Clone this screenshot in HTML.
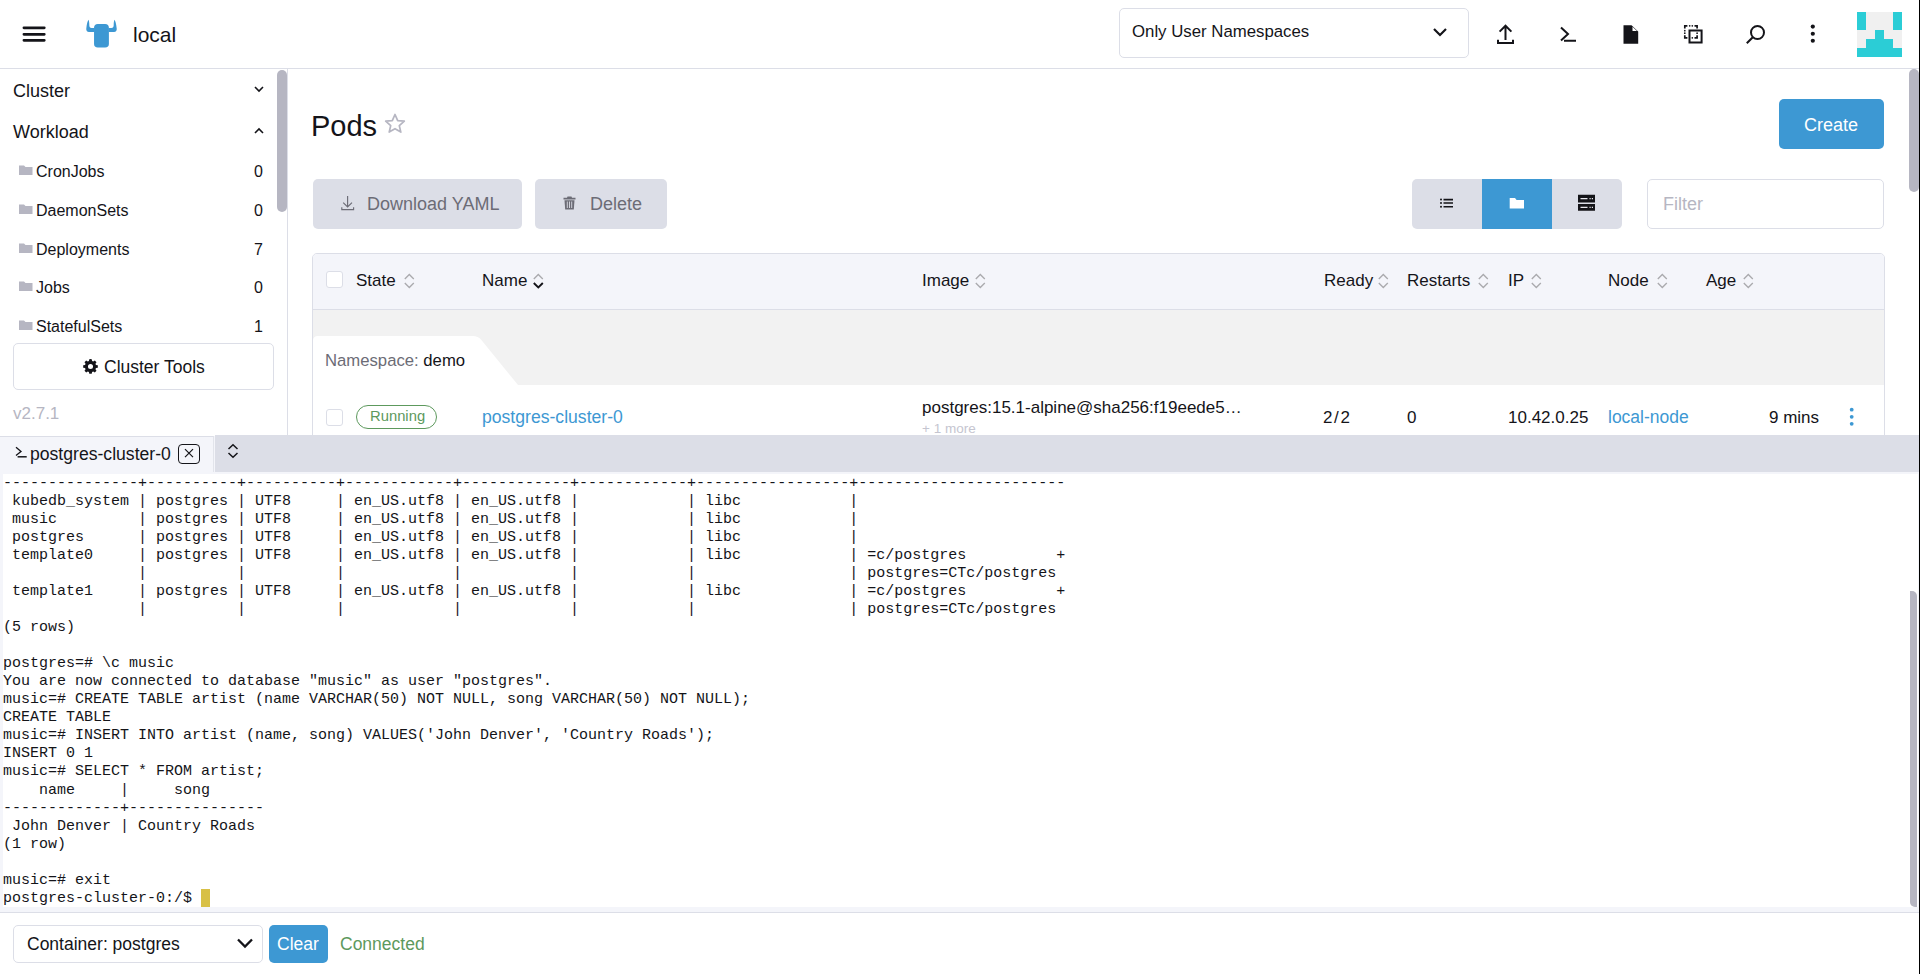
<!DOCTYPE html>
<html><head><meta charset="utf-8">
<style>
*{box-sizing:border-box;margin:0;padding:0}
html,body{width:1920px;height:974px;overflow:hidden;background:#fff}
body{font-family:"Liberation Sans",sans-serif;color:#141419;position:relative}
.a{position:absolute}
.t{position:absolute;white-space:nowrap;line-height:1}
svg{display:block}
#hdr{left:0;top:0;width:1920px;height:69px;border-bottom:1px solid #dcdee7;background:#fff}
#side{left:0;top:69px;width:288px;height:366px;border-right:1px solid #dcdee7;background:#fff}
.cnt{color:#141419}
.btn-dis{background:#dcdee7;border-radius:5px;color:#6c6c76}
.hdrc{font-size:17px;color:#141419}
.sort{position:absolute}
#term{left:0;top:472px;width:1920px;height:440px;background:#f4f5fa}
#termin{position:absolute;left:3px;top:2px;width:1915px;height:433px;background:#fff;overflow:hidden}
.tl{font-family:"Liberation Mono",monospace;font-size:15px;line-height:18px;height:18px;color:#141419;position:absolute;left:0;white-space:pre}
</style></head>
<body>
<!-- HEADER -->
<div id="hdr" class="a">
  <svg class="a" style="left:20px;top:22px" width="28" height="24" viewBox="0 0 28 24"><path d="M3.9 5.85H24.3M3.9 12.35H24.3M3.9 18.35H24.3" stroke="#141419" stroke-width="2.7" stroke-linecap="round"/></svg>
  <svg class="a" style="left:86px;top:19px" width="32" height="30" viewBox="0 0 32 30"><rect x="8.04" y="5" width="14.86" height="23.6" rx="3.8" fill="#3d98d3"/><path fill="#3d98d3" d="M8.5 9H5.6C4 9 3.3 7.8 3.3 6C3.3 4 3.1 2 2.5 0.8C1.6 2 0.8 5 0.3 9.5C0 11.5 1 12.9 3 12.9H8.5Z M22.5 9H25.4C27 9 27.7 7.8 27.7 6C27.7 4 27.9 2 28.5 0.8C29.4 2 30.2 5 30.7 9.5C31 11.5 30 12.9 28 12.9H22.5Z"/></svg>
  <div class="t" style="left:133px;top:24px;font-size:21px">local</div>
  <div class="a" style="left:1119px;top:8px;width:350px;height:50px;border:1px solid #dcdee7;border-radius:5px"></div>
  <div class="t" style="left:1132px;top:24px;font-size:16.8px">Only User Namespaces</div>
  <svg class="a" style="left:1432px;top:27px" width="16" height="10" viewBox="0 0 16 10"><path d="M2 2l6 6 6-6" fill="none" stroke="#141419" stroke-width="2.2"/></svg>
  <svg class="a" style="left:1495px;top:23px" width="22" height="22" viewBox="0 0 22 22"><path d="M10.5 3V17M4.6 8.6l5.9-5.9 5.9 5.9M3 16.8v3.2h15v-3.2" fill="none" stroke="#141419" stroke-width="2"/></svg>
  <svg class="a" style="left:1558px;top:25px" width="20" height="18" viewBox="0 0 20 18"><path d="M3 2.5l7 6.5-7 6.5M6 15.8h12" fill="none" stroke="#141419" stroke-width="2"/></svg>
  <svg class="a" style="left:1623px;top:25px" width="16" height="19" viewBox="0 0 16 19"><path d="M0.5 0.3H8.5L15.2 6.5V18.7H0.5z" fill="#141419"/><path d="M9.5 1.8V6H14z" fill="#fff"/></svg>
  <svg class="a" style="left:1683px;top:24px" width="21" height="21" viewBox="0 0 21 21"><g fill="none" stroke="#141419" stroke-width="1.7"><path d="M1.8 4.4V1.8H4.4M11.5 1.8H14.1V4.4M1.8 11.2V13.8H4.4M11.5 13.8H14.1V11.2"/></g><g fill="#141419"><circle cx="6.7" cy="1.8" r="0.85"/><circle cx="9.3" cy="1.8" r="0.85"/><circle cx="1.8" cy="6.7" r="0.85"/><circle cx="1.8" cy="9.2" r="0.85"/><circle cx="14.1" cy="9.2" r="0.85"/><circle cx="9.3" cy="13.8" r="0.85"/></g><rect x="6.5" y="6.5" width="12.1" height="12" fill="none" stroke="#141419" stroke-width="2"/></svg>
  <svg class="a" style="left:1745px;top:23px" width="22" height="22" viewBox="0 0 22 22"><circle cx="12.5" cy="9.5" r="6.5" fill="none" stroke="#141419" stroke-width="2"/><path d="M7.8 14.2L1.8 20.2" stroke="#141419" stroke-width="2"/></svg>
  <svg class="a" style="left:1808px;top:22px" width="10" height="24" viewBox="0 0 10 24"><circle cx="4.8" cy="4.6" r="2.1" fill="#141419"/><circle cx="4.8" cy="11.75" r="2.1" fill="#141419"/><circle cx="4.8" cy="18.75" r="2.1" fill="#141419"/></svg>
  <svg class="a" style="left:1857px;top:12px" width="45" height="45" viewBox="0 0 5 5" shape-rendering="crispEdges"><rect width="5" height="5" fill="#f0f0f0"/><path fill="#2bcdd6" d="M0 0h1v2H0zM4 0h1v2H4zM2 2h1v1H2zM1 3h3v1H1zM0 4h5v1H0z"/></svg>
</div>
<!-- SIDEBAR -->
<div id="side" class="a">
  <div class="t" style="left:13px;top:13px;font-size:18px">Cluster</div>
  <svg class="a" style="left:254px;top:17px" width="10" height="7" viewBox="0 0 10 7"><path d="M1 1l4 4 4-4" fill="none" stroke="#141419" stroke-width="1.6"/></svg>
  <div class="t" style="left:13px;top:54px;font-size:18px">Workload</div>
  <svg class="a" style="left:254px;top:58px" width="10" height="7" viewBox="0 0 10 7"><path d="M1 6l4-4 4 4" fill="none" stroke="#141419" stroke-width="1.6"/></svg>
  <svg class="a" style="left:19px;top:96px" width="14" height="10" viewBox="0 0 14 10"><path d="M0 0.5h5l1.5 1.5H13.5V10H0z" fill="#b6b6c2"/></svg>
  <div class="t" style="left:36px;top:95px;font-size:16px">CronJobs</div>
  <div class="t" style="left:254px;top:95px;font-size:16px">0</div>
  <svg class="a" style="left:19px;top:135px" width="14" height="10" viewBox="0 0 14 10"><path d="M0 0.5h5l1.5 1.5H13.5V10H0z" fill="#b6b6c2"/></svg>
  <div class="t" style="left:36px;top:134px;font-size:16px">DaemonSets</div>
  <div class="t" style="left:254px;top:134px;font-size:16px">0</div>
  <svg class="a" style="left:19px;top:174px" width="14" height="10" viewBox="0 0 14 10"><path d="M0 0.5h5l1.5 1.5H13.5V10H0z" fill="#b6b6c2"/></svg>
  <div class="t" style="left:36px;top:173px;font-size:16px">Deployments</div>
  <div class="t" style="left:254px;top:173px;font-size:16px">7</div>
  <svg class="a" style="left:19px;top:212px" width="14" height="10" viewBox="0 0 14 10"><path d="M0 0.5h5l1.5 1.5H13.5V10H0z" fill="#b6b6c2"/></svg>
  <div class="t" style="left:36px;top:211px;font-size:16px">Jobs</div>
  <div class="t" style="left:254px;top:211px;font-size:16px">0</div>
  <svg class="a" style="left:19px;top:251px" width="14" height="10" viewBox="0 0 14 10"><path d="M0 0.5h5l1.5 1.5H13.5V10H0z" fill="#b6b6c2"/></svg>
  <div class="t" style="left:36px;top:250px;font-size:16px">StatefulSets</div>
  <div class="t" style="left:254px;top:250px;font-size:16px">1</div>

  <div class="a" style="left:13px;top:274px;width:261px;height:47px;border:1px solid #dcdee7;border-radius:5px"></div>
  <svg class="a" style="left:83px;top:290px" width="15" height="15" viewBox="0 0 16 16"><path fill="#141419" d="M8 0l1.3 0.2 0.4 2 1.2 0.5 1.7-1.1 1.8 1.8-1.1 1.7 0.5 1.2 2 0.4v2.6l-2 0.4-0.5 1.2 1.1 1.7-1.8 1.8-1.7-1.1-1.2 0.5-0.4 2H6.7l-0.4-2-1.2-0.5-1.7 1.1-1.8-1.8 1.1-1.7-0.5-1.2-2-0.4V6.7l2-0.4 0.5-1.2-1.1-1.7 1.8-1.8 1.7 1.1 1.2-0.5 0.4-2zM8 5.3A2.7 2.7 0 1 0 8 10.7 2.7 2.7 0 1 0 8 5.3z"/></svg>
  <div class="t" style="left:104px;top:290px;font-size:17.5px">Cluster Tools</div>
  <div class="t" style="left:13px;top:336px;font-size:17px;color:#b6b6c2">v2.7.1</div>
  <div class="a" style="left:277px;top:1px;width:10px;height:142px;border-radius:5px;background:#b6b6c2"></div>
</div>
<!-- MAIN -->

  <div class="t" style="left:311px;top:112px;font-size:29px">Pods</div>
  <svg class="a" style="left:384px;top:113px" width="22" height="21" viewBox="0 0 22 21"><path d="M11 1.5l2.7 6.1 6.6 0.6-5 4.4 1.5 6.5L11 15.7l-5.8 3.4 1.5-6.5-5-4.4 6.6-0.6z" fill="none" stroke="#b6b6c2" stroke-width="1.75" stroke-linejoin="round"/></svg>
  <div class="a" style="left:1779px;top:99px;width:105px;height:50px;background:#3d98d3;border-radius:5px"></div>
  <div class="t" style="left:1804px;top:116px;font-size:18px;color:#fff">Create</div>

  <div class="a btn-dis" style="left:313px;top:179px;width:209px;height:50px"></div>
  <svg class="a" style="left:340px;top:195px" width="16" height="16" viewBox="0 0 16 16"><path d="M7.6 1V11.6M3.2 7.6L7.6 12 12 7.6M1.8 12.3V14.6H13.6V12.3" fill="none" stroke="#6c6c76" stroke-width="1.15"/></svg>
  <div class="t" style="left:367px;top:195px;font-size:18px;color:#6c6c76">Download YAML</div>
  <div class="a btn-dis" style="left:535px;top:179px;width:132px;height:50px"></div>
  <svg class="a" style="left:563px;top:196px" width="13" height="14" viewBox="0 0 13 14"><path d="M4.5 0.5h4l0.5 1.2h3.5v1.8H0.5V1.7H4z" fill="#6c6c76"/><path d="M1.5 4.3h10l-0.7 9.2H2.2z" fill="#6c6c76"/><path d="M4.3 5.5v6.5M6.5 5.5v6.5M8.7 5.5v6.5" stroke="#dcdee7" stroke-width="0.9"/></svg>
  <div class="t" style="left:590px;top:195px;font-size:18px;color:#6c6c76">Delete</div>

  <div class="a" style="left:1412px;top:179px;width:210px;height:50px;background:#dcdee7;border-radius:5px"></div>
  <div class="a" style="left:1482px;top:179px;width:70px;height:50px;background:#3d98d3"></div>
  <svg class="a" style="left:1440px;top:198px" width="14" height="11" viewBox="0 0 14 11"><circle cx="1" cy="1.6" r="1" fill="#141419"/><circle cx="1" cy="5" r="1" fill="#141419"/><circle cx="1" cy="8.8" r="1" fill="#141419"/><path d="M3.5 1.6h9.5M3.5 5h9.5M3.5 8.8h9.5" stroke="#141419" stroke-width="1.6"/></svg>
  <svg class="a" style="left:1509px;top:197px" width="16" height="13" viewBox="0 0 16 13"><path d="M0.7 1h5.3l1.6 2h7.4v8.6H0.7z" fill="#fff"/></svg>
  <svg class="a" style="left:1578px;top:194px" width="18" height="18" viewBox="0 0 18 18"><path d="M0 0.8h17v7.8H0zM0 10h17v6.8H0z" fill="#141419"/><path d="M2.5 4.7h7M11.5 4.7h1.2M13.8 4.7h1.2M2.5 13.4h7M11.5 13.4h1.2M13.8 13.4h1.2" stroke="#e8e8ee" stroke-width="1.2"/></svg>
  <div class="a" style="left:1647px;top:179px;width:237px;height:50px;border:1px solid #dcdee7;border-radius:5px"></div>
  <div class="t" style="left:1663px;top:195px;font-size:18px;color:#b6b6c2">Filter</div>

  <!-- table -->
  <div class="a" style="left:312px;top:253px;width:1573px;height:200px;border:1px solid #dcdee7;border-radius:5px 5px 0 0;overflow:hidden">
    <div class="a" style="left:0;top:0;width:1571px;height:56px;background:#f4f5fa;border-bottom:1px solid #dcdee7"></div>
    <div class="a" style="left:0;top:56px;width:1571px;height:75px;background:#f2f2f2"></div>
    <svg class="a" style="left:0;top:82px" width="220" height="49" viewBox="0 0 220 49"><path d="M0 49V5Q0 0 5 0H160Q165 0 168 3.5L205 49z" fill="#fff"/></svg>
    <div class="a" style="left:0;top:131px;width:1571px;height:70px;background:#fff"></div>
  </div>


  <div class="a" style="left:326px;top:271px;width:17px;height:17px;border:1px solid #dcdee7;border-radius:3px;background:#fff"></div>
  <div class="t hdrc" style="left:356px;top:272px">State</div>
  <svg class="a" style="left:404px;top:273px" width="11" height="16" viewBox="0 0 11 16"><path d="M0.8 6L5.3 1.5 9.8 6" fill="none" stroke="#aaaaae" stroke-width="1.35"/><path d="M0.8 10L5.3 14.5 9.8 10" fill="none" stroke="#aaaaae" stroke-width="1.35"/></svg>
  <div class="t hdrc" style="left:482px;top:272px">Name</div>
  <svg class="a" style="left:533px;top:273px" width="11" height="16" viewBox="0 0 11 16"><path d="M0.8 6L5.3 1.5 9.8 6" fill="none" stroke="#aaaaae" stroke-width="1.35"/><path d="M0.8 10L5.3 14.5 9.8 10" fill="none" stroke="#141419" stroke-width="1.9"/></svg>
  <div class="t hdrc" style="left:922px;top:272px">Image</div>
  <svg class="a" style="left:975px;top:273px" width="11" height="16" viewBox="0 0 11 16"><path d="M0.8 6L5.3 1.5 9.8 6" fill="none" stroke="#aaaaae" stroke-width="1.35"/><path d="M0.8 10L5.3 14.5 9.8 10" fill="none" stroke="#aaaaae" stroke-width="1.35"/></svg>
  <div class="t hdrc" style="left:1324px;top:272px">Ready</div>
  <svg class="a" style="left:1378px;top:273px" width="11" height="16" viewBox="0 0 11 16"><path d="M0.8 6L5.3 1.5 9.8 6" fill="none" stroke="#aaaaae" stroke-width="1.35"/><path d="M0.8 10L5.3 14.5 9.8 10" fill="none" stroke="#aaaaae" stroke-width="1.35"/></svg>
  <div class="t hdrc" style="left:1407px;top:272px">Restarts</div>
  <svg class="a" style="left:1478px;top:273px" width="11" height="16" viewBox="0 0 11 16"><path d="M0.8 6L5.3 1.5 9.8 6" fill="none" stroke="#aaaaae" stroke-width="1.35"/><path d="M0.8 10L5.3 14.5 9.8 10" fill="none" stroke="#aaaaae" stroke-width="1.35"/></svg>
  <div class="t hdrc" style="left:1508px;top:272px">IP</div>
  <svg class="a" style="left:1531px;top:273px" width="11" height="16" viewBox="0 0 11 16"><path d="M0.8 6L5.3 1.5 9.8 6" fill="none" stroke="#aaaaae" stroke-width="1.35"/><path d="M0.8 10L5.3 14.5 9.8 10" fill="none" stroke="#aaaaae" stroke-width="1.35"/></svg>
  <div class="t hdrc" style="left:1608px;top:272px">Node</div>
  <svg class="a" style="left:1657px;top:273px" width="11" height="16" viewBox="0 0 11 16"><path d="M0.8 6L5.3 1.5 9.8 6" fill="none" stroke="#aaaaae" stroke-width="1.35"/><path d="M0.8 10L5.3 14.5 9.8 10" fill="none" stroke="#aaaaae" stroke-width="1.35"/></svg>
  <div class="t hdrc" style="left:1706px;top:272px">Age</div>
  <svg class="a" style="left:1743px;top:273px" width="11" height="16" viewBox="0 0 11 16"><path d="M0.8 6L5.3 1.5 9.8 6" fill="none" stroke="#aaaaae" stroke-width="1.35"/><path d="M0.8 10L5.3 14.5 9.8 10" fill="none" stroke="#aaaaae" stroke-width="1.35"/></svg>

  <div class="t" style="left:325px;top:353px;font-size:16.7px;color:#6c6c76">Namespace: <span style="color:#141419">demo</span></div>
  <div class="a" style="left:326px;top:409px;width:17px;height:17px;border:1px solid #dcdee7;border-radius:3px;background:#fff"></div>
  <div class="a" style="left:356px;top:405px;width:81px;height:24px;border:1px solid #5d995d;border-radius:12px"></div>
  <div class="t" style="left:370px;top:409px;font-size:14.8px;color:#5d995d">Running</div>
  <div class="t" style="left:482px;top:409px;font-size:17.6px;color:#3d98d3">postgres-cluster-0</div>
  <div class="t" style="left:922px;top:399px;font-size:17px">postgres:15.1-alpine@sha256:f19eede5…</div>
  <div class="t" style="left:922px;top:422px;font-size:13.5px;color:#c5c5d0">+ 1 more</div>
  <div class="t" style="left:1323px;top:409px;font-size:17px;letter-spacing:1.6px">2/2</div>
  <div class="t" style="left:1407px;top:409px;font-size:17px">0</div>
  <div class="t" style="left:1508px;top:409px;font-size:17px">10.42.0.25</div>
  <div class="t" style="left:1608px;top:409px;font-size:17.5px;color:#3d98d3">local-node</div>
  <div class="t" style="left:1769px;top:409px;font-size:17px">9 mins</div>
  <svg class="a" style="left:1848px;top:406px" width="8" height="21" viewBox="0 0 8 21"><circle cx="3.7" cy="3.7" r="1.9" fill="#3d98d3"/><circle cx="3.7" cy="10.8" r="1.9" fill="#3d98d3"/><circle cx="3.7" cy="17.8" r="1.9" fill="#3d98d3"/></svg>
<!-- TERMINAL -->
<div class="a" style="left:0;top:435px;width:1920px;height:37px;background:#dcdee7"></div>

<div class="a" style="left:0;top:435px;width:215px;height:37px;background:#f4f5fa"></div><div class="a" style="left:0;top:435px;width:215px;height:1px;background:#fff"></div><div class="a" style="left:0;top:436px;width:214px;height:36px;background:#f4f5fa;border-top:1px solid #dcdee7;border-right:1px solid #e2e4eb"></div>
<svg class="a" style="left:14px;top:445px" width="14" height="14" viewBox="0 0 14 14"><path d="M2 2.2L7 6.4 2 10.5" fill="none" stroke="#141419" stroke-width="1.3"/><path d="M3.6 11.8H12.7" stroke="#141419" stroke-width="1.5"/></svg>
<div class="t" style="left:30px;top:446px;font-size:17.6px">postgres-cluster-0</div>
<div class="a" style="left:178px;top:444px;width:22px;height:20px;border:1.3px solid #141419;border-radius:4px"></div>
<svg class="a" style="left:183px;top:447px" width="12" height="12" viewBox="0 0 12 12"><path d="M2 2.2l8 8M10 2.2l-8 8" stroke="#141419" stroke-width="1.2"/></svg>
<svg class="a" style="left:227px;top:443px" width="13" height="16" viewBox="0 0 13 16"><path d="M1.5 6L6 1.8l4.5 4.2M1.5 10L6 14.3l4.5-4.3" fill="none" stroke="#141419" stroke-width="1.5"/></svg>
<div id="term" class="a">
 <div id="termin">
<div class="tl" style="top:1px">---------------+----------+----------+------------+------------+------------+-----------------+-----------------------</div>
<div class="tl" style="top:19px"> kubedb_system | postgres | UTF8     | en_US.utf8 | en_US.utf8 |            | libc            | </div>
<div class="tl" style="top:37px"> music         | postgres | UTF8     | en_US.utf8 | en_US.utf8 |            | libc            | </div>
<div class="tl" style="top:55px"> postgres      | postgres | UTF8     | en_US.utf8 | en_US.utf8 |            | libc            | </div>
<div class="tl" style="top:73px"> template0     | postgres | UTF8     | en_US.utf8 | en_US.utf8 |            | libc            | =c/postgres          +</div>
<div class="tl" style="top:91px">               |          |          |            |            |            |                 | postgres=CTc/postgres</div>
<div class="tl" style="top:109px"> template1     | postgres | UTF8     | en_US.utf8 | en_US.utf8 |            | libc            | =c/postgres          +</div>
<div class="tl" style="top:127px">               |          |          |            |            |            |                 | postgres=CTc/postgres</div>
<div class="tl" style="top:145px">(5 rows)</div>
<div class="tl" style="top:163px">&nbsp;</div>
<div class="tl" style="top:181px">postgres=# \c music</div>
<div class="tl" style="top:199px">You are now connected to database &quot;music&quot; as user &quot;postgres&quot;.</div>
<div class="tl" style="top:217px">music=# CREATE TABLE artist (name VARCHAR(50) NOT NULL, song VARCHAR(50) NOT NULL);</div>
<div class="tl" style="top:235px">CREATE TABLE</div>
<div class="tl" style="top:253px">music=# INSERT INTO artist (name, song) VALUES(&#x27;John Denver&#x27;, &#x27;Country Roads&#x27;);</div>
<div class="tl" style="top:271px">INSERT 0 1</div>
<div class="tl" style="top:289px">music=# SELECT * FROM artist;</div>
<div class="tl" style="top:308px">    name     |     song      </div>
<div class="tl" style="top:326px">-------------+---------------</div>
<div class="tl" style="top:344px"> John Denver | Country Roads</div>
<div class="tl" style="top:362px">(1 row)</div>
<div class="tl" style="top:380px">&nbsp;</div>
<div class="tl" style="top:398px">music=# exit</div>
<div class="tl" style="top:416px">postgres-cluster-0:/$ </div>
<div class="a" style="left:198px;top:415px;width:9px;height:18px;background:#d8c046"></div>
 </div>
</div>
<div class="a" style="left:0;top:912px;width:1920px;height:62px;background:#fff;border-top:1px solid #dcdee7"></div>

<div class="a" style="left:13px;top:925px;width:250px;height:38px;border:1px solid #dcdee7;border-radius:5px;background:#fff"></div>
<div class="t" style="left:27px;top:936px;font-size:17.5px">Container: postgres</div>
<svg class="a" style="left:235px;top:937px" width="20" height="12" viewBox="0 0 20 12"><path d="M3 2.5l7 7 7-7" fill="none" stroke="#141419" stroke-width="2.3"/></svg>
<div class="a" style="left:269px;top:925px;width:59px;height:38px;background:#3d98d3;border-radius:5px"></div>
<div class="t" style="left:277px;top:936px;font-size:17.5px;color:#fff">Clear</div>
<div class="t" style="left:340px;top:936px;font-size:17.5px;color:#5d995d">Connected</div>

<div class="a" style="left:1909px;top:69px;width:10px;height:123px;background:#b6b6c2;border-radius:5px"></div>
<div class="a" style="left:1910px;top:591px;width:7px;height:316px;background:#b6b6c2;border-radius:0 5px 0 5px"></div>
<div class="a" style="left:1919px;top:0;width:1px;height:974px;background:#000"></div>
</body></html>
